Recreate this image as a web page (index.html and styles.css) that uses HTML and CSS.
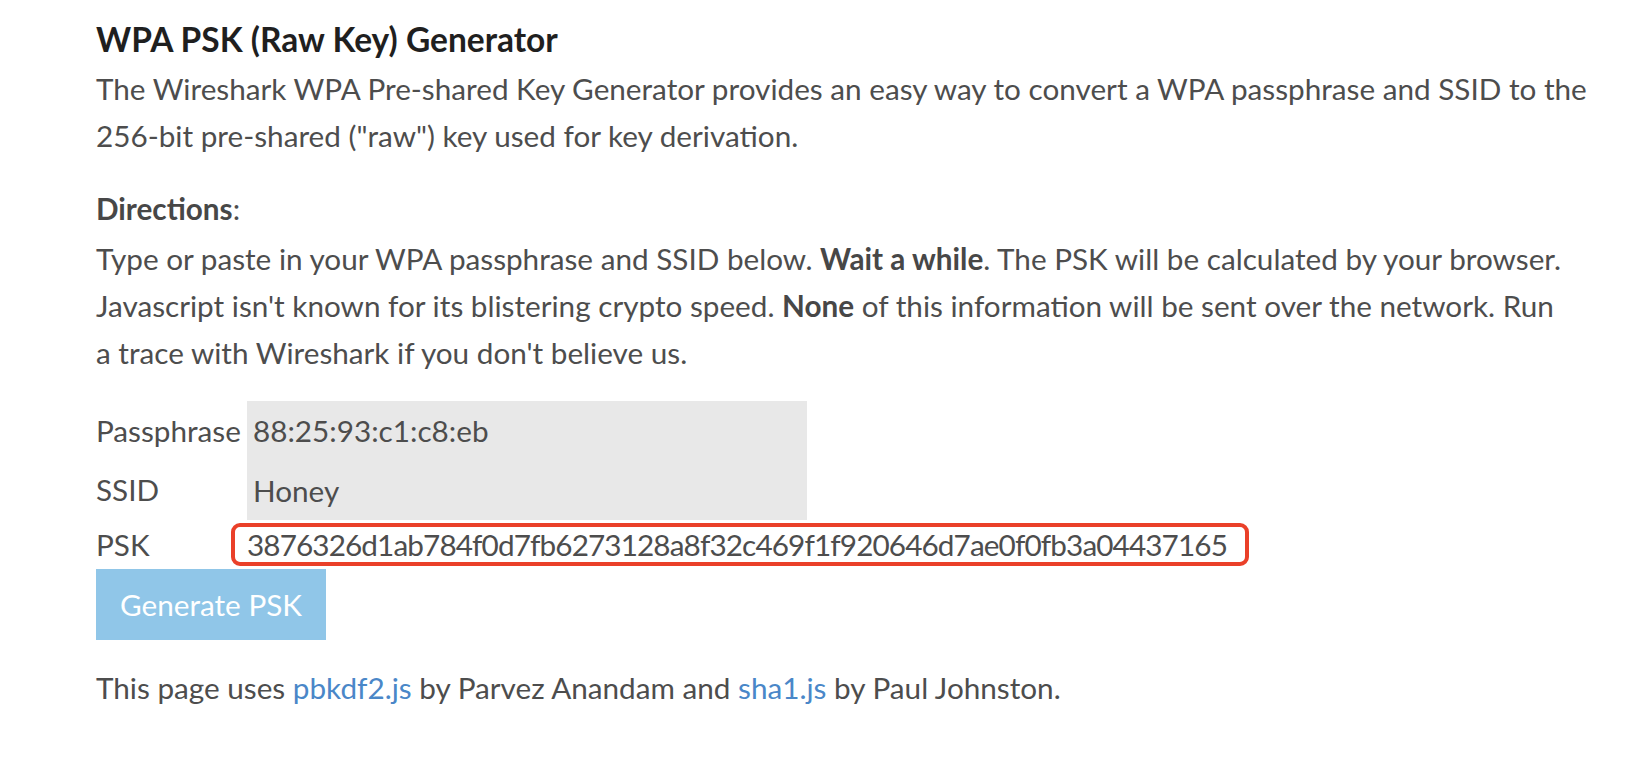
FILE: index.html
```html
<!DOCTYPE html>
<html lang="en">
<head>
<meta charset="utf-8">
<title>WPA PSK (Raw Key) Generator</title>
<link rel="stylesheet" href="styles.css">
</head>
<body>
<main class="page">
  <h1 class="title">WPA PSK (Raw Key) Generator</h1>
  <p class="intro">The Wireshark WPA Pre-shared Key Generator provides an easy way to convert a WPA passphrase and SSID to the 256-bit pre-shared ("raw") key used for key derivation.</p>
  <p class="directions-head"><strong>Directions</strong>:</p>
  <p class="directions">Type or paste in your WPA passphrase and SSID below. <strong>Wait a while</strong>. The PSK will be calculated by your browser. Javascript isn't known for its blistering crypto speed. <strong>None</strong> of this information will be sent over the network. Run a trace with Wireshark if you don't believe us.</p>
  <form class="psk-form">
    <div class="form-grid">
      <label class="form-label" for="passphrase">Passphrase</label>
      <input class="form-input" id="passphrase" type="text" value="88:25:93:c1:c8:eb">
      <label class="form-label" for="ssid">SSID</label>
      <input class="form-input" id="ssid" type="text" value="Honey">
      <span class="form-label">PSK</span>
      <div class="psk-cell"><span class="psk-value">3876326d1ab784f0d7fb6273128a8f32c469f1f920646d7ae0f0fb3a04437165</span></div>
    </div>
    <button class="generate-btn" type="button">Generate PSK</button>
  </form>
  <p class="footer-note">This page uses <a class="link" href="#">pbkdf2.js</a> by Parvez Anandam and <a class="link" href="#">sha1.js</a> by Paul Johnston.</p>
</main>
</body>
</html>
```

FILE: styles.css
```css
html, body {
  margin: 0;
  padding: 0;
  background: #ffffff;
}

body {
  font-family: Lato, "Liberation Sans", sans-serif;
  color: #4d4d4d;
  font-size: 29.7px;
  line-height: 46.7px;
}

.page {
  padding: 19px 0 0 96px;
  width: 1496px;
}

.title {
  margin: 0;
  font-size: 33.5px;
  line-height: 40px;
  font-weight: 700;
  color: #1f1f1f;
}

.intro {
  margin: 7px 0 0;
}

.directions-head {
  margin: 27px 0 0;
}

.directions {
  margin: 3px 0 0;
  max-width: 1468px;
}

strong {
  font-weight: 700;
  color: #474747;
}

.psk-form {
  margin: 25px 0 0;
}

.form-grid {
  display: grid;
  grid-template-columns: 151px 1fr;
  grid-template-rows: 59.5px 59.5px 49px;
  align-items: center;
}

.form-label {
  font-size: 29.7px;
  line-height: 40px;
  white-space: nowrap;
}

.form-input {
  box-sizing: border-box;
  width: 560px;
  height: 100%;
  margin: 0;
  border: none;
  outline: none;
  padding: 0 6px;
  background: #e8e8e8;
  font-family: inherit;
  font-size: 29.7px;
  color: #4d4d4d;
  border-radius: 0;
}

.psk-cell {
  display: flex;
  align-items: center;
  height: 100%;
}

.psk-value {
  box-sizing: border-box;
  height: 43px;
  line-height: 35px;
  margin-left: -16px;
  padding: 0 18px 0 12px;
  border: 4px solid #ea4029;
  border-radius: 9px;
  white-space: nowrap;
  letter-spacing: -0.88px;
}

.generate-btn {
  display: block;
  height: 71px;
  margin: 0;
  padding: 0 24px;
  border: none;
  border-radius: 0;
  background: #90c6e8;
  color: #ffffff;
  font-family: inherit;
  font-size: 29.7px;
  cursor: pointer;
}

.footer-note {
  margin: 25px 0 0;
}

.link {
  color: #4a87c8;
  text-decoration: none;
}
```
